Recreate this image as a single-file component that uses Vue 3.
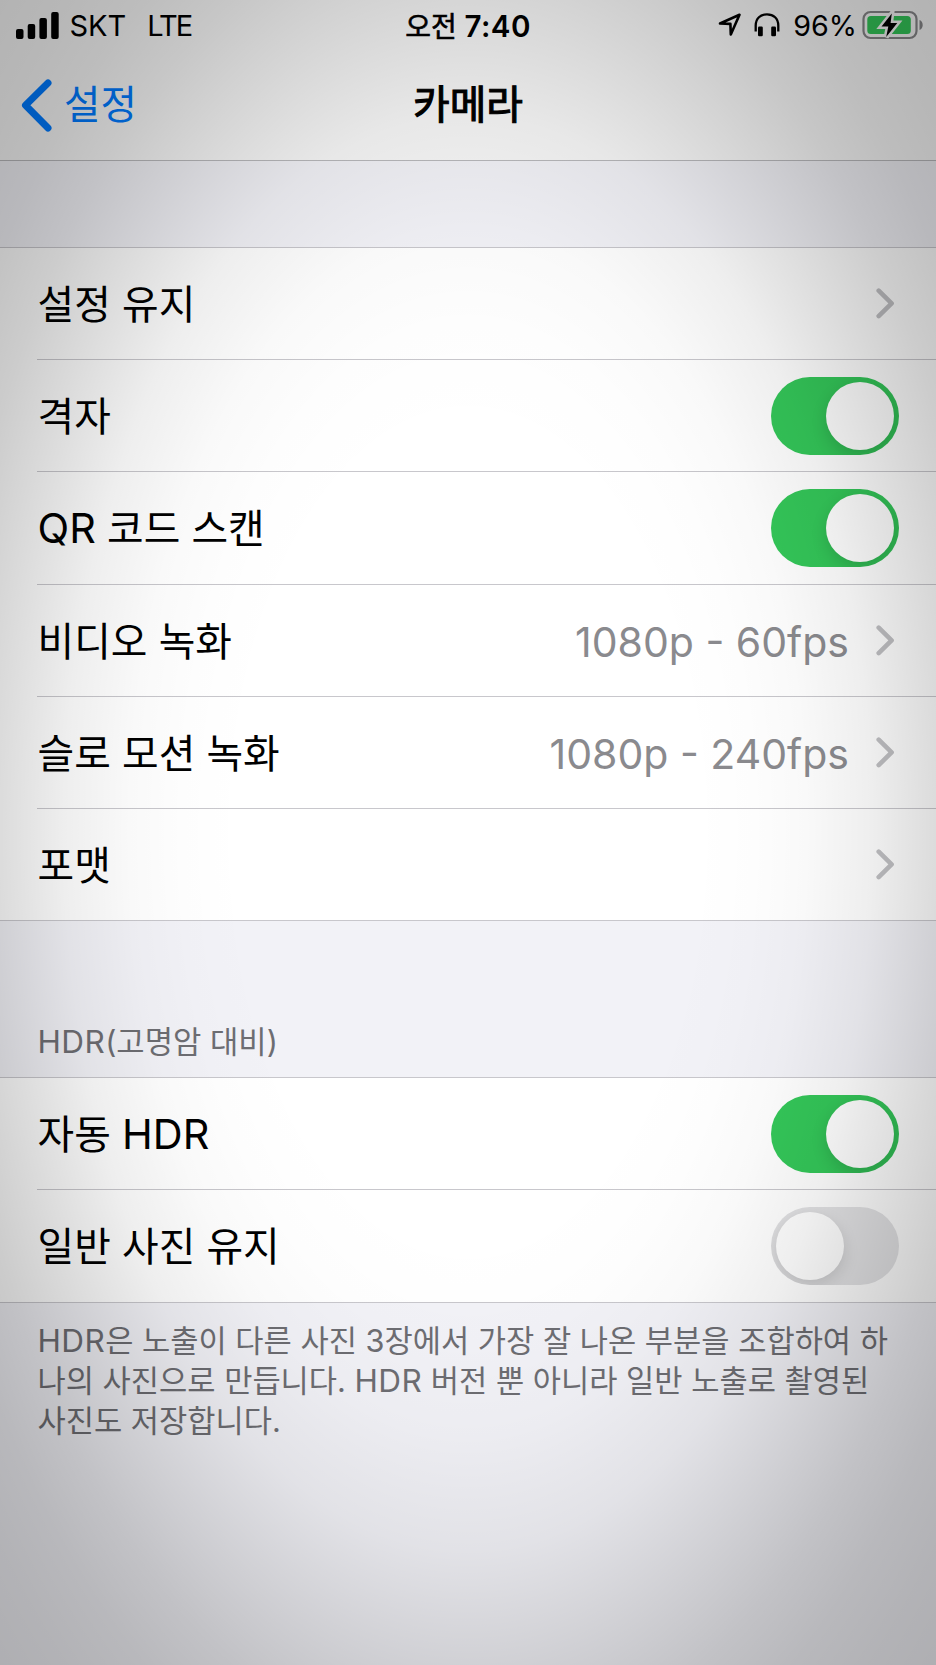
<template>
  <div class="screen">
    <header class="top-area">
      <!-- 상태 막대 -->
      <div class="status-bar">
        <div class="status-left">
          <svg class="signal" width="43" height="27" viewBox="0 0 43 27">
            <rect x="0" y="17" width="7.5" height="10" rx="2" />
            <rect x="11.7" y="12" width="7.5" height="15" rx="2" />
            <rect x="23.4" y="6" width="7.5" height="21" rx="2" />
            <rect x="35.2" y="0" width="7.5" height="27" rx="2" />
          </svg>
          <span class="carrier">SKT</span>
          <span class="network">LTE</span>
        </div>
        <div class="status-time"><span class="ampm">오전</span> 7:40</div>
        <div class="status-right">
          <svg class="location" width="24" height="24" viewBox="0 0 24 24">
            <path d="M2 10.5 L21.5 1.8 L12.8 21.5 L12.4 10.9 Z" />
          </svg>
          <svg class="headphones" width="26" height="24" viewBox="0 0 26 24">
            <path class="band" d="M1.7 18.5 V12.5 C1.7 5.5 6.5 1.3 13 1.3 S24.3 5.5 24.3 12.5 V18.5" />
            <rect x="4" y="13.6" width="4.8" height="9.6" rx="1.2" />
            <rect x="17.2" y="13.6" width="4.8" height="9.6" rx="1.2" />
          </svg>
          <span class="percent">96%</span>
          <svg class="battery" width="62" height="32" viewBox="0 0 62 32">
            <rect class="shell" x="1.5" y="3" width="53" height="26" rx="7" />
            <path class="cap" d="M57.5 11 C61.8 12.5 61.8 19.5 57.5 21 Z" />
            <rect class="charge" x="5.3" y="7" width="43.5" height="18" rx="3.5" />
            <path class="bolt-edge" d="M29.8 4.5 L19.5 17.4 H26.3 L24.2 28 L35.3 14 H28.6 Z" />
            <path class="bolt" d="M29.8 4.5 L19.5 17.4 H26.3 L24.2 28 L35.3 14 H28.6 Z" />
          </svg>
        </div>
      </div>

      <!-- 내비게이션 막대 -->
      <nav class="nav-bar">
        <button class="back-btn">
          <svg width="31" height="53" viewBox="0 0 31 53">
            <path d="M27 4 L4.5 26.3 L27 49" />
          </svg>
          <span>설정</span>
        </button>
        <h1 class="nav-title">카메라</h1>
      </nav>
    </header>

    <main>
      <section v-for="group in groups" :key="group.id" class="group" :class="`group-${group.id}`">
        <h2 v-if="group.header" class="group-header">
          <span v-for="(part, i) in splitText(group.header)" :key="i" :class="{ latin: part.latin }">{{ part.text }}</span>
        </h2>
        <ul class="rows">
          <li v-for="row in group.rows" :key="row.label" class="row">
            <div class="row-label">
              <span v-for="(part, i) in splitText(row.label)" :key="i" :class="{ latin: part.latin }">{{ part.text }}</span>
            </div>
            <span v-if="row.value" class="row-value">{{ row.value }}</span>
            <button
              v-if="row.type === 'switch'"
              class="switch"
              :class="{ on: row.on }"
              role="switch"
              :aria-checked="row.on"
              @click="row.on = !row.on"
            >
              <span class="knob"></span>
            </button>
            <svg v-else class="chevron" width="19" height="31" viewBox="0 0 19 31">
              <path d="M2.7 2.7 L15.6 15.4 L2.7 28.1" />
            </svg>
          </li>
        </ul>
        <div v-if="group.footer" class="group-footer">
          <p v-for="line in group.footer" :key="line">
            <span v-for="(part, i) in splitText(line)" :key="i" :class="{ latin: part.latin }">{{ part.text }}</span>
          </p>
        </div>
      </section>
    </main>

    <div class="vignette"></div>
  </div>
</template>

<script setup>
import { ref } from 'vue';

// 설정 항목
const groups = ref([
  {
    id: 'camera',
    rows: [
      { label: '설정 유지', type: 'link' },
      { label: '격자', type: 'switch', on: true },
      { label: 'QR 코드 스캔', type: 'switch', on: true },
      { label: '비디오 녹화', type: 'link', value: '1080p - 60fps' },
      { label: '슬로 모션 녹화', type: 'link', value: '1080p - 240fps' },
      { label: '포맷', type: 'link' }
    ]
  },
  {
    id: 'hdr',
    header: 'HDR(고명암 대비)',
    rows: [
      { label: '자동 HDR', type: 'switch', on: true },
      { label: '일반 사진 유지', type: 'switch', on: false }
    ],
    footer: [
      'HDR은 노출이 다른 사진 3장에서 가장 잘 나온 부분을 조합하여 하',
      '나의 사진으로 만듭니다. HDR 버전 뿐 아니라 일반 노출로 촬영된',
      '사진도 저장합니다.'
    ]
  }
]);

// 영문 단어와 한글을 나눠 크기를 따로 맞춘다
const splitText = (text) => {
  return text
    .split(/([A-Z]+)/)
    .filter(Boolean)
    .map(part => ({ text: part, latin: /[A-Z]/.test(part) }));
};
</script>

<style>
body {
  margin: 0;
  background-color: #f2f2f7;
}
</style>

<style scoped>
.screen {
  position: relative;
  height: 1665px;
  overflow: hidden;
  background-color: #f2f2f7;
  color: #000;
  font-family: Inter, 'Noto Sans CJK KR', sans-serif;
}

.top-area {
  height: 160px;
  background-color: #f8f8f8;
  border-bottom: 1px solid #b9b9bc;
}

.status-bar {
  display: grid;
  grid-template-columns: 1fr auto 1fr;
  height: 50px;
  align-items: center;
  font-size: 29px;
}

.status-left {
  display: flex;
  align-items: center;
  padding-left: 16px;
}

.carrier {
  margin-left: 10.5px;
}

.network {
  margin-left: 21px;
  letter-spacing: -1.9px;
}

.status-time {
  font-size: 29.6px;
  font-weight: 600;
  letter-spacing: 0.4px;
}

.ampm {
  font-size: 28px;
  font-weight: 400;
  letter-spacing: 0;
  -webkit-text-stroke: 0.6px #000;
}

.status-right {
  display: flex;
  align-items: center;
  justify-content: flex-end;
  padding-right: 12px;
}

.location {
  fill: none;
  stroke: #000;
  stroke-width: 2.6;
  stroke-linejoin: round;
  margin-right: 12px;
}

.headphones {
  margin-right: 13px;
}

.band {
  fill: none;
  stroke: #000;
  stroke-width: 2.3;
}

.percent {
  margin-right: 5px;
  font-size: 28.7px;
}

.shell {
  fill: none;
  stroke: #88888a;
  stroke-width: 2.2;
}

.cap {
  fill: #88888a;
}

.charge {
  fill: #34c759;
}

.bolt-edge {
  fill: #f8f8f8;
  stroke: #f8f8f8;
  stroke-width: 5;
}

.nav-bar {
  display: grid;
  grid-template-columns: 1fr auto 1fr;
  align-items: center;
  height: 110px;
}

.back-btn {
  display: flex;
  align-items: center;
  gap: 12px;
  padding: 0 0 0 21px;
  border: none;
  background: none;
  color: #007aff;
  font-family: inherit;
  font-size: 39.6px;
  line-height: 58px;
  cursor: pointer;
}

.back-btn path {
  fill: none;
  stroke: #007aff;
  stroke-width: 7;
  stroke-linecap: round;
  stroke-linejoin: round;
}

.nav-title {
  margin: 0;
  font-size: 39.8px;
  font-weight: 400;
  line-height: 58px;
  -webkit-text-stroke: 1.1px #000;
}

.group-camera {
  padding-top: 86px;
}

.group-header {
  box-sizing: border-box;
  height: 156px;
  margin: 0;
  padding: 98.5px 37.5px 0;
  color: #6d6d72;
  font-size: 30.8px;
  font-weight: 400;
  line-height: 44px;
}

.group-header .latin,
.group-footer .latin {
  font-size: 31.5px;
  letter-spacing: 0.4px;
  line-height: 1;
}

.rows {
  margin: 0;
  padding: 0;
  list-style: none;
  background-color: #fff;
  border-top: 1px solid #c8c7cc;
  border-bottom: 1px solid #c8c7cc;
}

.row {
  display: flex;
  align-items: center;
  box-sizing: border-box;
  height: 112.2px;
  margin-left: 37px;
  padding-right: 37px;
  border-bottom: 1px solid #c8c7cc;
  font-size: 39.8px;
}

.row:last-child {
  height: 111.2px;
  border-bottom: none;
}

.row-label {
  flex: 1;
  padding: 3px 0 0 0.6px;
  line-height: 58px;
}

.row-label .latin {
  font-size: 41.4px;
  line-height: 1;
}

.row-value {
  margin-right: 27px;
  padding-top: 4px;
  color: #8a8a8e;
  font-size: 41px;
}

.chevron {
  margin-right: 4px;
}

.chevron path {
  fill: none;
  stroke: #c0c0c3;
  stroke-width: 4.6;
  stroke-linecap: round;
  stroke-linejoin: round;
}

.switch {
  display: flex;
  box-sizing: border-box;
  width: 128px;
  height: 78px;
  padding: 5px;
  overflow: hidden;
  border: none;
  border-radius: 39px;
  background-color: #e3e3e5;
  cursor: pointer;
}

.switch.on {
  justify-content: flex-end;
  background-color: #34c759;
}

.knob {
  width: 68px;
  height: 68px;
  border-radius: 50%;
  background-color: #fff;
  box-shadow: 0 6px 16px rgba(0, 0, 0, 0.13);
}

.group-footer {
  padding: 18px 0 0 37.5px;
  color: #6d6d72;
  font-size: 30.7px;
  line-height: 40px;
}

.group-footer p {
  margin: 0;
  white-space: nowrap;
}

/* 가장자리를 어둡게 덮는 레이어 */
.vignette {
  position: absolute;
  inset: 0;
  pointer-events: none;
  background: radial-gradient(
    ellipse farthest-corner at 50% 50%,
    rgba(0, 0, 0, 0) 34%,
    rgba(0, 0, 0, 0.007) 43%,
    rgba(0, 0, 0, 0.023) 51%,
    rgba(0, 0, 0, 0.065) 61%,
    rgba(0, 0, 0, 0.14) 71%,
    rgba(0, 0, 0, 0.2) 79%,
    rgba(0, 0, 0, 0.24) 86%,
    rgba(0, 0, 0, 0.263) 93%,
    rgba(0, 0, 0, 0.28) 100%
  );
}
</style>
